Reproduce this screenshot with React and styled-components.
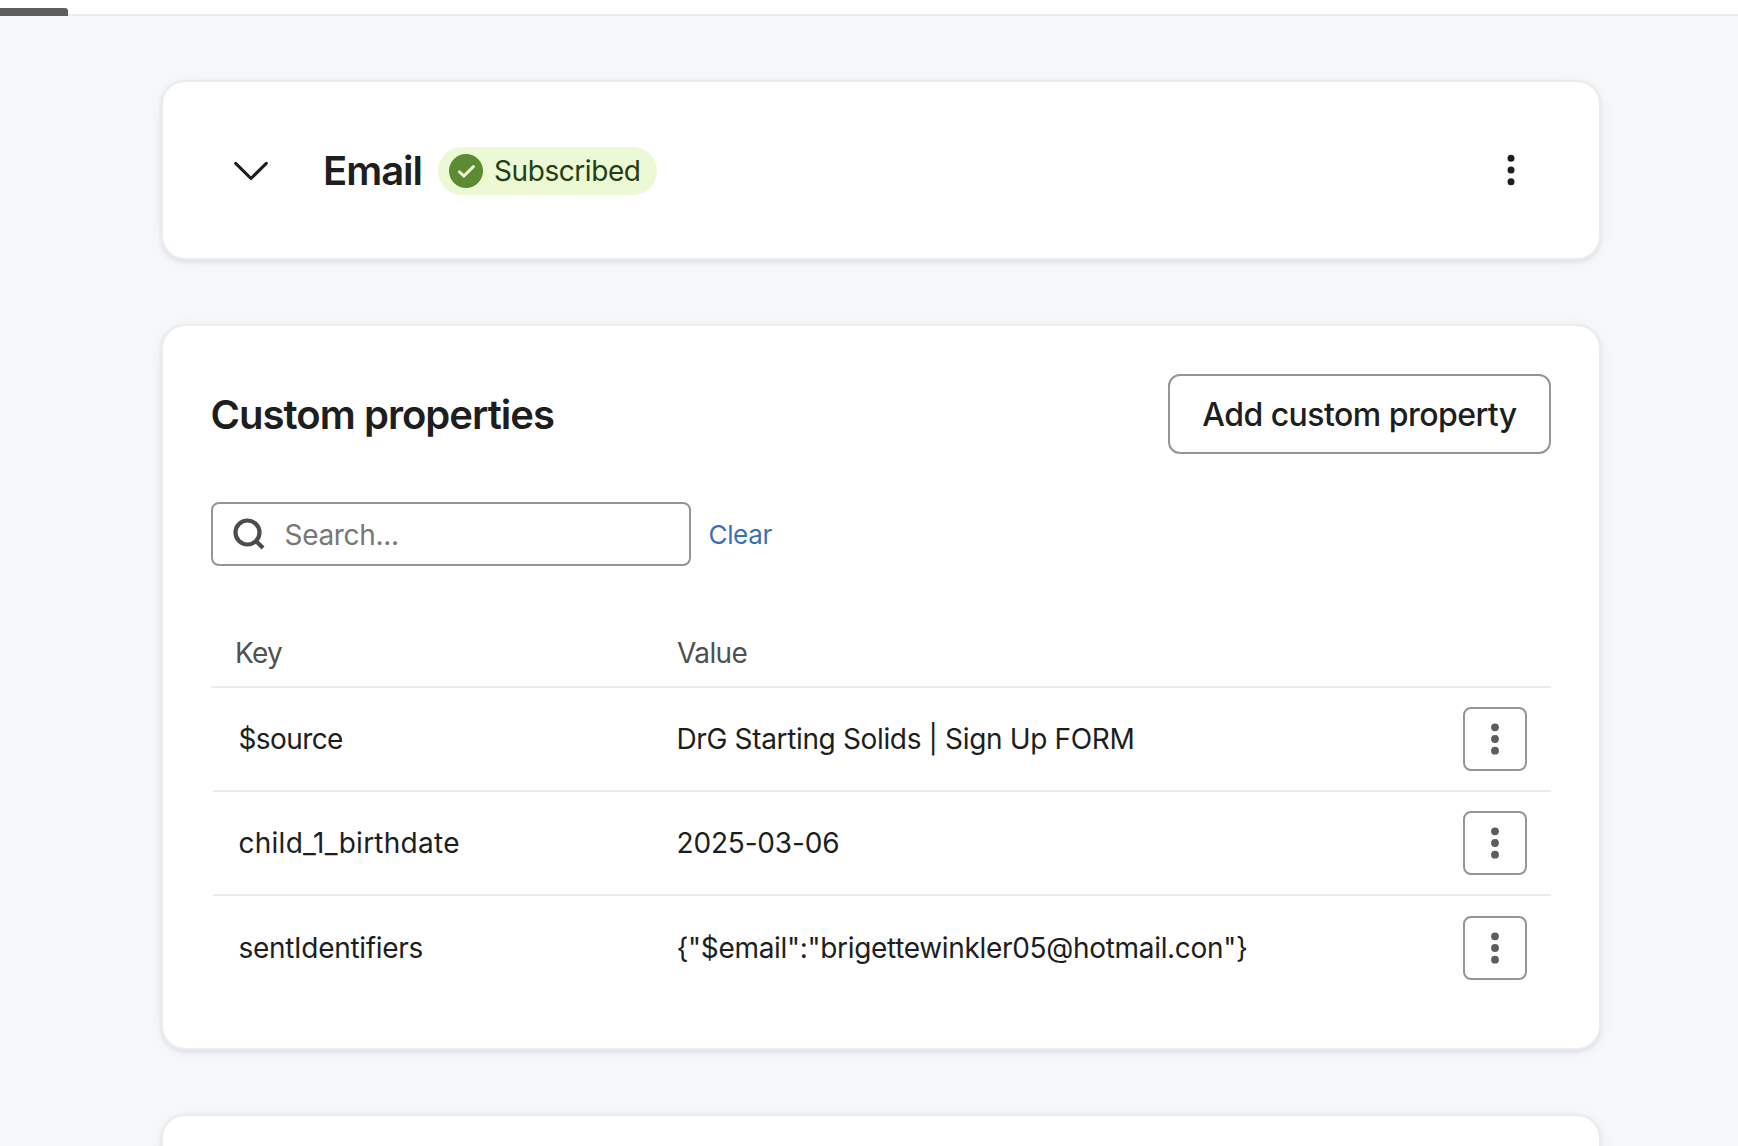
import React, { useState } from "react";
import styled, { createGlobalStyle } from "styled-components";

const ink = "#1d1e20";
const muted = "#4f5152";
const outline = "#949596";
const hairline = "#eaecee";

const GlobalStyle = createGlobalStyle`
  *, *::before, *::after { box-sizing: border-box; }
  html, body { margin: 0; height: 100%; overflow: hidden; background: #f6f8fa; }
  body, button, input {
    font-family: Inter, "Liberation Sans", sans-serif;
    font-size: 28px;
    color: ${ink};
  }
`;

const Page = styled.div`
  height: 1146px;
  overflow: hidden;
  background: #f6f8fa;
`;

const TabBar = styled.nav`
  display: flex;
  align-items: flex-end;
  height: 16px;
  background: #fff;
  border-bottom: 2px solid ${hairline};
`;

const ActiveTab = styled.span`
  width: 68px;
  height: 8px;
  margin-bottom: -2px;
  border-top-right-radius: 3px;
  background: #5d5e60;
`;

const Content = styled.main`
  display: flex;
  flex-direction: column;
  gap: 64px;
  width: 1440px;
  margin: 64px 0 0 161px;
`;

const Card = styled.section`
  height: ${(p) => p.$height}px;
  flex: none;
  padding: ${(p) => p.$padding};
  background: #fff;
  border: 2px solid ${hairline};
  border-radius: 24px;
  background-clip: padding-box;
  box-shadow: 0 2px 4px rgba(32, 50, 66, 0.1), 0 2px 20px rgba(32, 50, 66, 0.04);
`;

const ChannelRow = styled.div`
  display: flex;
  align-items: center;
  height: 48px;
`;

const IconButton = styled.button`
  display: grid;
  place-items: center;
  width: ${(p) => p.$size}px;
  height: ${(p) => p.$size}px;
  padding: 0;
  border: 0;
  background: none;
`;

const CardMenuButton = styled(IconButton)`
  padding-bottom: 2px;
`;

const OutlinedIconButton = styled(IconButton)`
  border: 2px solid ${outline};
  border-radius: 8px;
  background: #fff;
`;

const Title = styled.h2`
  margin: 0;
  font-size: 40px;
  font-weight: 600;
  line-height: 48px;
  letter-spacing: ${(p) => p.$tracking}px;
  white-space: nowrap;
`;

const Badge = styled.span`
  display: flex;
  align-items: center;
  gap: 11px;
  width: 219px;
  height: 48px;
  margin-left: auto;
  padding-left: 11px;
  border-radius: 24px;
  background: #edf8d5;
  color: #233f14;
  line-height: 48px;
  letter-spacing: -0.43px;
`;

const ChannelName = styled.div`
  display: flex;
  width: 334px;
  margin-left: 52px;
`;

const Spacer = styled.div`
  flex: 1;
`;

const PropertiesHeader = styled.header`
  display: flex;
  align-items: center;
  justify-content: space-between;
  height: 80px;

  ${Title} {
    padding-top: 2px;
    margin-left: -0.5px;
  }
`;

const AddButton = styled.button`
  width: 383px;
  height: 80px;
  padding: 0;
  border: 2px solid ${outline};
  border-radius: 12px;
  background: #fff;
  font-size: 32px;
  font-weight: 500;
  letter-spacing: -0.54px;
`;

const SearchRow = styled.div`
  display: flex;
  align-items: center;
  gap: 17.5px;
  margin-top: 48px;
`;

const SearchField = styled.label`
  display: flex;
  align-items: center;
  gap: 19.5px;
  width: 480px;
  height: 64px;
  padding: 0 20px;
  border: 2px solid ${outline};
  border-radius: 8px;
`;

const SearchInput = styled.input`
  flex: 1;
  min-width: 0;
  height: 60px;
  padding: 2px 0 0;
  border: 0;
  outline: 0;
  background: none;
  letter-spacing: -0.32px;

  &::placeholder { color: #777878; opacity: 1; }
`;

const ClearLink = styled.a`
  padding-top: 2px;
  color: #3b6fb9;
  font-size: 26px;
  line-height: 32px;
  letter-spacing: -0.35px;
`;

const Table = styled.div`
  margin-top: 54px;
`;

const HeaderRow = styled.div`
  display: grid;
  grid-template-columns: 442px 1fr;
  align-items: center;
  height: 68px;
  padding-left: 24px;
  border-bottom: 2px solid ${hairline};
  color: ${muted};
`;

const Row = styled.div`
  display: grid;
  grid-template-columns: 438px 1fr 64px;
  align-items: center;
  height: 104px;
  margin-left: 1px;
  padding: 0 24px 0 24.5px;
  border-left: 2px solid transparent;
  border-bottom: 2px solid ${hairline};

  &:last-child {
    height: 105px;
    padding-top: 1px;
    border-bottom-color: transparent;
  }
`;

const Cell = styled.span`
  white-space: nowrap;
  letter-spacing: ${(p) => p.$tracking}px;
`;

const ChevronIcon = () => (
  <svg width="36" height="24" viewBox="0 0 36 24" fill="none" stroke={ink} strokeWidth="3.1" strokeLinecap="round" strokeLinejoin="round">
    <path d="M2.7 4.3 18 19.5 33.3 4.3" />
  </svg>
);

const CheckIcon = () => (
  <svg width="34" height="34" viewBox="0 0 34 34" fill="none">
    <circle cx="17" cy="17" r="17" fill="#5d8b33" />
    <path d="M10.4 17.8 14.9 22 24.4 12.6" stroke="#edf8d5" strokeWidth="3" strokeLinecap="round" />
  </svg>
);

const SearchIcon = () => (
  <svg width="32" height="32" viewBox="0 0 32 32" fill="none" stroke="#4b4c4e" strokeWidth="4.2">
    <circle cx="14.5" cy="14.5" r="12" />
    <path d="M22.4 22.4 30 30" />
  </svg>
);

const KebabIcon = ({ r, color }) => (
  <svg width="10" height="34" viewBox="0 0 10 34" fill={color}>
    <circle cx="5" cy="5.3" r={r} />
    <circle cx="5" cy="17" r={r} />
    <circle cx="5" cy="28.7" r={r} />
  </svg>
);

const properties = [
  { name: "$source", nameTracking: -0.6, value: "DrG Starting Solids | Sign Up FORM", tracking: -0.35 },
  { name: "child_1_birthdate", nameTracking: 0.26, value: "2025-03-06", tracking: -0.17 },
  { name: "sentIdentifiers", nameTracking: -0.3, value: '{"$email":"brigettewinkler05@hotmail.con"}', tracking: -0.32 },
];

export default function App() {
  const [query, setQuery] = useState("");
  return (
    <>
      <GlobalStyle />
      <Page>
        <TabBar>
          <ActiveTab />
        </TabBar>
        <Content>
          <Card $height={180} $padding="65px 64px 0 68px">
            <ChannelRow>
              <IconButton $size={40} aria-label="Expand email">
                <ChevronIcon />
              </IconButton>
              <ChannelName>
                <Title $tracking={-1.04}>Email</Title>
                <Badge>
                  <CheckIcon />
                  Subscribed
                </Badge>
              </ChannelName>
              <Spacer />
              <CardMenuButton $size={48} aria-label="Email actions">
                <KebabIcon r={3.5} color={ink} />
              </CardMenuButton>
            </ChannelRow>
          </Card>

          <Card $height={726} $padding="48px">
            <PropertiesHeader>
              <Title $tracking={-0.96}>Custom properties</Title>
              <AddButton>Add custom property</AddButton>
            </PropertiesHeader>
            <SearchRow>
              <SearchField>
                <SearchIcon />
                <SearchInput
                  placeholder="Search..."
                  value={query}
                  onChange={(e) => setQuery(e.target.value)}
                />
              </SearchField>
              <ClearLink onClick={() => setQuery("")}>Clear</ClearLink>
            </SearchRow>
            <Table>
              <HeaderRow>
                <Cell $tracking={-0.8}>Key</Cell>
                <Cell $tracking={-0.6}>Value</Cell>
              </HeaderRow>
              {properties.map((p) => (
                <Row key={p.name}>
                  <Cell $tracking={p.nameTracking}>{p.name}</Cell>
                  <Cell $tracking={p.tracking}>{p.value}</Cell>
                  <OutlinedIconButton $size={64} aria-label={`${p.name} actions`}>
                    <KebabIcon r={3.9} color="#5c5d5f" />
                  </OutlinedIconButton>
                </Row>
              ))}
            </Table>
          </Card>

          <Card $height={180} $padding="48px" />
        </Content>
      </Page>
    </>
  );
}
